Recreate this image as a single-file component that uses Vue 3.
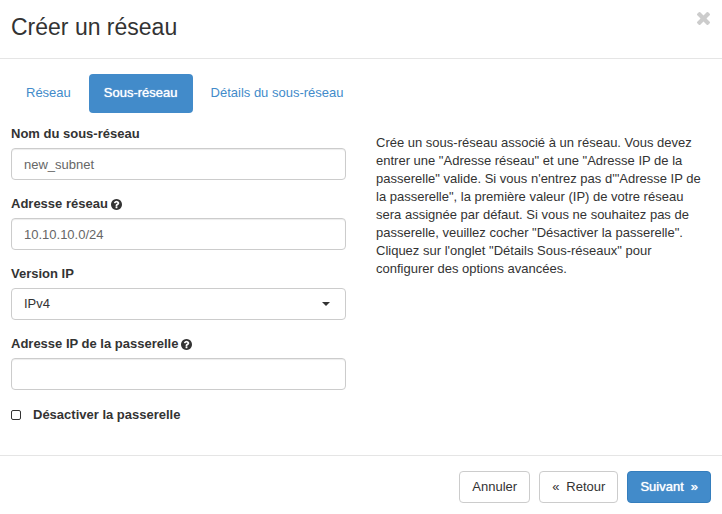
<script setup>
import { ref } from 'vue'

const tabs = ['Réseau', 'Sous-réseau', 'Détails du sous-réseau']
const activeTab = ref(1)
const subnetName = ref('new_subnet')
const networkAddress = ref('10.10.10.0/24')
const ipVersion = ref('IPv4')
const gatewayIp = ref('')
const disableGateway = ref(false)

const helpPath =
  'M1024 1376v-192q0-14-9-23t-23-9h-192q-14 0-23 9t-9 23v192q0 14 9 23t23 9h192q14 0 23-9t9-23zm256-672q0-88-55.5-163t-138.5-116-170-41q-243 0-371 213-15 24 8 42l132 100q7 6 19 6 16 0 25-12 53-68 86-92 34-24 86-24 48 0 85.5 26t37.5 59q0 38-20 61t-68 45q-63 28-115.5 86.5t-52.5 125.5v36q0 14 9 23t23 9h192q14 0 23-9t9-23q0-19 21.5-49.5t54.5-49.5q32-18 49-28.5t46-35 44.5-48 28-60.5 12.5-81zm384 192q0 209-103 385.5t-279.5 279.5-385.5 103-385.5-103-279.5-279.5-103-385.5 103-385.5 279.5-279.5 385.5-103 385.5 103 279.5 279.5 103 385.5z'
</script>

<template>
  <form class="modal" @submit.prevent>
    <header class="header">
      <h3 class="title">Créer un réseau</h3>
      <button type="button" class="close" aria-label="Fermer">
        <svg viewBox="302 366 1188 1188" width="13" height="13" aria-hidden="true">
          <path
            fill="currentColor"
            d="M1490 1322q0 40-28 68l-136 136q-28 28-68 28t-68-28l-294-294-294 294q-28 28-68 28t-68-28l-136-136q-28-28-28-68t28-68l294-294-294-294q-28-28-28-68t28-68l136-136q28-28 68-28t68 28l294 294 294-294q28-28 68-28t68 28l136 136q28 28 28 68t-28 68l-294 294 294 294q28 28 28 68z"
          />
        </svg>
      </button>
    </header>

    <main class="body">
      <nav class="tabs">
        <a
          v-for="(tab, i) in tabs"
          :key="tab"
          href="#"
          class="tab"
          :class="{ active: i === activeTab }"
          @click.prevent="activeTab = i"
          >{{ tab }}</a
        >
      </nav>

      <div class="columns">
        <div class="fields">
          <div class="field">
            <label class="label" for="subnet-name">Nom du sous-réseau</label>
            <input id="subnet-name" v-model="subnetName" class="control" type="text" />
          </div>
          <div class="field">
            <label class="label" for="network-address">
              Adresse réseau
              <svg class="help" viewBox="128 128 1536 1536" width="11" height="11" aria-hidden="true">
                <path fill="currentColor" :d="helpPath" />
              </svg>
            </label>
            <input id="network-address" v-model="networkAddress" class="control" type="text" />
          </div>
          <div class="field">
            <label class="label" for="ip-version">Version IP</label>
            <div class="select">
              <select id="ip-version" v-model="ipVersion" class="control">
                <option>IPv4</option>
                <option>IPv6</option>
              </select>
              <svg class="caret" viewBox="0 0 8 4" width="8" height="4" aria-hidden="true">
                <path fill="currentColor" d="M0 0h8L4 4z" />
              </svg>
            </div>
          </div>
          <div class="field">
            <label class="label" for="gateway-ip">
              Adresse IP de la passerelle
              <svg class="help" viewBox="128 128 1536 1536" width="11" height="11" aria-hidden="true">
                <path fill="currentColor" :d="helpPath" />
              </svg>
            </label>
            <input id="gateway-ip" v-model="gatewayIp" class="control" type="text" />
          </div>
          <div class="check">
            <input id="disable-gateway" v-model="disableGateway" class="box" type="checkbox" />
            <label class="label" for="disable-gateway">Désactiver la passerelle</label>
          </div>
        </div>

        <p class="description">
          Crée un sous-réseau associé à un réseau. Vous devez entrer une "Adresse réseau" et une
          "Adresse IP de la passerelle" valide. Si vous n'entrez pas d'"Adresse IP de la
          passerelle", la première valeur (IP) de votre réseau sera assignée par défaut. Si vous ne
          souhaitez pas de passerelle, veuillez cocher "Désactiver la passerelle". Cliquez sur
          l'onglet "Détails Sous-réseaux" pour configurer des options avancées.
        </p>
      </div>
    </main>

    <footer class="footer">
      <button type="button" class="btn">Annuler</button>
      <button type="button" class="btn"><span>«</span><span>Retour</span></button>
      <button type="submit" class="btn primary"><span>Suivant</span><span>»</span></button>
    </footer>
  </form>
</template>

<style>
body {
  background: #fff;
}
</style>

<style scoped>
.modal {
  font-family: 'Liberation Sans', Arial, sans-serif;
  font-size: 13px;
  line-height: 18px;
  color: #333;
}

.modal * {
  box-sizing: border-box;
}

.header {
  display: flex;
  justify-content: space-between;
  align-items: flex-start;
  padding: 12px 12px 15px 11px;
  border-bottom: 1px solid #e5e5e5;
}

.title {
  margin: 0;
  font-size: 23px;
  font-weight: 400;
  line-height: 31px;
}

.close {
  display: flex;
  padding: 0;
  border: 0;
  background: none;
  color: #ccc;
  cursor: pointer;
}

.body {
  padding: 15px 11px 30px;
}

.tabs {
  display: flex;
  gap: 3px;
  margin-bottom: 12px;
}

.tab {
  padding: 10px 15px 11px;
  border-radius: 4px;
  line-height: 18px;
  color: #428bca;
  text-decoration: none;
}

.tab.active {
  background: #428bca;
  color: #fff;
  text-shadow: 0 0 1px #fff;
}

.columns {
  display: grid;
  grid-template-columns: 1fr 1fr;
  gap: 30px;
}

.field {
  margin-bottom: 15px;
}

.label {
  display: flex;
  align-items: center;
  gap: 3px;
  font-weight: 700;
}

.field .label {
  margin-bottom: 5px;
}

.control {
  display: block;
  width: 100%;
  height: 32px;
  padding: 6px 12px;
  border: 1px solid #ccc;
  border-radius: 4px;
  background: #fff;
  box-shadow: inset 0 1px 1px rgba(0, 0, 0, 0.075);
  font: inherit;
  color: #666;
}

.select {
  position: relative;
}

.select .control {
  appearance: none;
  box-shadow: none;
  color: #333;
}

.caret {
  position: absolute;
  top: 14px;
  right: 16px;
  pointer-events: none;
}

.check {
  display: flex;
  align-items: center;
  gap: 12px;
  line-height: 20px;
}

.box {
  appearance: none;
  width: 10px;
  height: 10px;
  margin: 0;
  border: 1px solid #333;
  border-radius: 2px;
}

.box:checked {
  background: #333;
}

.description {
  margin: 9px 0 0;
}

.footer {
  display: flex;
  justify-content: flex-end;
  gap: 9px;
  padding: 15px 11px;
  border-top: 1px solid #e5e5e5;
}

.btn {
  display: flex;
  gap: 7px;
  padding: 6px 12px;
  border: 1px solid #ccc;
  border-radius: 4px;
  background: #fff;
  font: inherit;
  color: #333;
  cursor: pointer;
}

.primary {
  border-color: #357ebd;
  background: #428bca;
  color: #fff;
  text-shadow: 0 0 1px #fff;
}
</style>
